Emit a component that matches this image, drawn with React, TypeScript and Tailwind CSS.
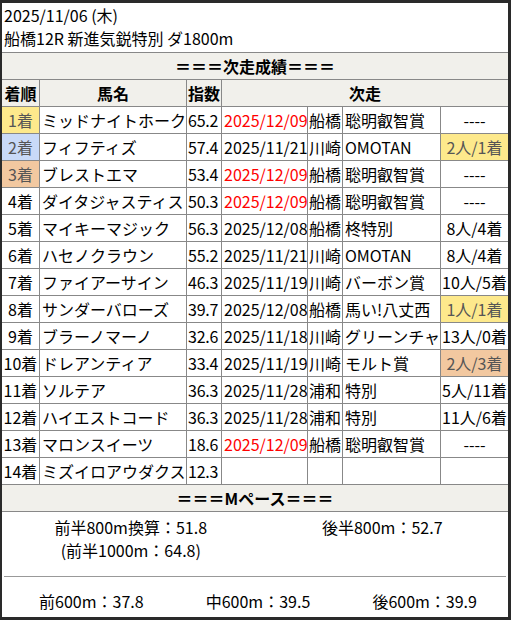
import React from "react";

type Row = {
  rank: string;
  rankBg?: string;
  name: string;
  idx: string;
  date: string;
  red?: boolean;
  venue: string;
  race: string;
  result: string;
  resBg?: string;
};

const rows: Row[] = [
  { rank: "1着", rankBg: "bg-[#fde98c]", name: "ミッドナイトホーク", idx: "65.2", date: "2025/12/09", red: true, venue: "船橋", race: "聡明叡智賞", result: "----" },
  { rank: "2着", rankBg: "bg-[#c9daf8]", name: "フィフティズ", idx: "57.4", date: "2025/11/21", venue: "川崎", race: "OMOTAN", result: "2人/1着", resBg: "bg-[#fde98c]" },
  { rank: "3着", rankBg: "bg-[#f2c8a0]", name: "ブレストエマ", idx: "53.4", date: "2025/12/09", red: true, venue: "船橋", race: "聡明叡智賞", result: "----" },
  { rank: "4着", name: "ダイタジャスティス", idx: "50.3", date: "2025/12/09", red: true, venue: "船橋", race: "聡明叡智賞", result: "----" },
  { rank: "5着", name: "マイキーマジック", idx: "56.3", date: "2025/12/08", venue: "船橋", race: "柊特別", result: "8人/4着" },
  { rank: "6着", name: "ハセノクラウン", idx: "55.2", date: "2025/11/21", venue: "川崎", race: "OMOTAN", result: "8人/4着" },
  { rank: "7着", name: "ファイアーサイン", idx: "46.3", date: "2025/11/19", venue: "川崎", race: "バーボン賞", result: "10人/5着" },
  { rank: "8着", name: "サンダーバローズ", idx: "39.7", date: "2025/12/08", venue: "船橋", race: "馬い!八丈西", result: "1人/1着", resBg: "bg-[#fde98c]" },
  { rank: "9着", name: "ブラーノマーノ", idx: "32.6", date: "2025/11/18", venue: "川崎", race: "グリーンチャ", result: "13人/0着" },
  { rank: "10着", name: "ドレアンティア", idx: "33.4", date: "2025/11/19", venue: "川崎", race: "モルト賞", result: "2人/3着", resBg: "bg-[#f2c8a0]" },
  { rank: "11着", name: "ソルテア", idx: "36.3", date: "2025/11/28", venue: "浦和", race: "特別", result: "5人/11着" },
  { rank: "12着", name: "ハイエストコード", idx: "36.3", date: "2025/11/28", venue: "浦和", race: "特別", result: "11人/6着" },
  { rank: "13着", name: "マロンスイーツ", idx: "18.6", date: "2025/12/09", red: true, venue: "船橋", race: "聡明叡智賞", result: "----" },
  { rank: "14着", name: "ミズイロアウダクス", idx: "12.3", date: "", venue: "", race: "", result: "" },
];

export default function App() {
  return (
    <div
      className="w-[511px] h-[620px] bg-white text-[16px] text-black border-l-2 border-r-[3px] border-y-[3px] border-[#2a2a2a] flex flex-col overflow-hidden"
      style={{ fontFamily: '"Noto Sans CJK JP", "Noto Sans", sans-serif' }}
    >
      <div className="h-[50px] border-b border-[#888] pl-[2px] pt-[1px] leading-[23px]">
        <div>2025/11/06 (木)</div>
        <div>船橋12R 新進気鋭特別 ダ1800m</div>
      </div>
      <div className="h-[27px] border-b border-[#888] bg-[#f1f0eb] font-bold text-center leading-[26px]">
        ＝＝＝次走成績＝＝＝
      </div>
      <div className="h-[27px] border-b border-[#888] bg-[#f1f0eb] font-bold flex leading-[26px]">
        <div className="w-[38px] border-r border-[#888] text-center">着順</div>
        <div className="w-[147px] border-r border-[#888] text-center">馬名</div>
        <div className="w-[35px] border-r border-[#888] text-center">指数</div>
        <div className="flex-1 text-center">次走</div>
      </div>
      {rows.map((r) => (
        <div key={r.rank} className="h-[27px] border-b border-[#888] flex leading-[26px] whitespace-nowrap">
          <div className={`w-[38px] border-r border-[#888] text-center ${r.rankBg ? r.rankBg + " text-[#555]" : ""}`}>
            {r.rank}
          </div>
          <div className="w-[147px] border-r border-[#888] pl-[2px] overflow-hidden">{r.name}</div>
          <div className="w-[35px] border-r border-[#888] pl-[1px] overflow-hidden tracking-[-0.2px]">{r.idx}</div>
          <div className={`w-[86px] border-r border-[#888] pl-[2px] overflow-hidden ${r.red ? "text-[#ff0000]" : ""}`}>
            {r.date}
          </div>
          <div className="w-[35px] border-r border-[#888] pl-[1px] overflow-hidden">{r.venue}</div>
          <div className="w-[98px] border-r border-[#888] pl-[2px] overflow-hidden">{r.race}</div>
          <div className={`flex-1 text-center overflow-hidden ${r.resBg ? r.resBg + " text-[#555]" : ""}`}>
            {r.result}
          </div>
        </div>
      ))}
      <div className="h-[27px] border-b border-[#888] bg-[#f1f0eb] font-bold text-center leading-[26px]">
        ＝＝＝Mペース＝＝＝
      </div>
      <div className="pt-[4px] pl-[3px] leading-[23px] grid grid-cols-2 h-[64px]">
        <div className="text-center">
          <div>前半800m換算：51.8</div>
          <div>(前半1000m：64.8)</div>
        </div>
        <div className="text-center">後半800m：52.7</div>
      </div>
      <div className="mx-[2px] border-t border-[#999]" />
      <div className="pt-[13px] pl-[6px] leading-[23px] grid grid-cols-3">
        <div className="text-center">前600m：37.8</div>
        <div className="text-center">中600m：39.5</div>
        <div className="text-center">後600m：39.9</div>
      </div>
    </div>
  );
}
